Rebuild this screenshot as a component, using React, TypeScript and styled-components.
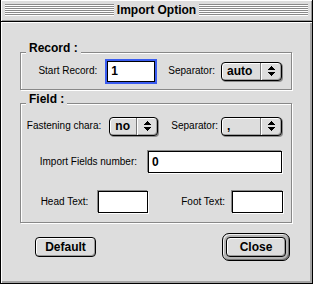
import styled, { createGlobalStyle } from 'styled-components';

const GlobalStyle = createGlobalStyle`
    html, body {
        margin: 0;
        padding: 0;
        background: #dddddd;
    }
    body {
        font-family: "Liberation Sans", Arial, sans-serif;
        color: #000;
    }
`;

const Window = styled.div`
    width: 313px;
    height: 284px;
    box-sizing: border-box;
    border: 1px solid #000;
    border-top: none;
    display: flex;
    flex-direction: column;
    background: #dddddd;
`;

const TitleBar = styled.div`
    height: 22px;
    box-sizing: border-box;
    padding: 4px 4px 5px 4px;
    display: flex;
    align-items: flex-start;
    border-bottom: 1px solid #000;
    background: #dddddd;
    box-shadow: inset 1px 1px 0 #fff, inset -1px -1px 0 #999;
`;

const Stripes = styled.div`
    flex: 1;
    height: 12px;
    background: repeating-linear-gradient(to bottom, #8a8a8a 0 1px, #ffffff 1px 2px);
`;

const Title = styled.div`
    padding: 0 3px;
    font-size: 12px;
    font-weight: bold;
    line-height: 12px;
    white-space: nowrap;
`;

const Content = styled.div`
    flex: 1;
    display: flex;
    flex-direction: column;
    padding-top: 30px;
    box-shadow: inset 1px 1px 0 #fff, inset -2px -2px 0 #a4a4a4;
`;

const GroupBox = styled.div<{ $height: number; $gap?: number }>`
    position: relative;
    box-sizing: border-box;
    margin: ${({ $gap }) => $gap ?? 0}px 0 0 19px;
    width: 272px;
    height: ${({ $height }) => $height}px;
    border: 1px solid #888;
    box-shadow: inset 1px 1px 0 #fff, 1px 1px 0 #fff;
    display: flex;
    flex-direction: column;
`;

const GroupTitle = styled.div`
    position: absolute;
    top: -12px;
    left: 5px;
    padding: 0 3px;
    background: #dddddd;
    font-size: 12px;
    font-weight: bold;
    line-height: 14px;
    white-space: nowrap;
`;

const Row = styled.div<{ $top?: number; $right?: number }>`
    display: flex;
    align-items: center;
    justify-content: flex-end;
    height: 22px;
    margin-top: ${({ $top }) => $top ?? 0}px;
    padding-right: ${({ $right }) => $right ?? 9}px;
`;

const RecordRow = styled(Row)`
    flex: 1;
    height: auto;
`;

const Label = styled.span<{ $left?: number; $right?: number }>`
    font-size: 10px;
    line-height: 12px;
    white-space: nowrap;
    margin-left: ${({ $left }) => $left ?? 0}px;
    margin-right: ${({ $right }) => $right ?? 0}px;
`;

const TextField = styled.div<{ $width: number; $height?: number; $focused?: boolean }>`
    box-sizing: border-box;
    width: ${({ $width }) => $width}px;
    height: ${({ $height }) => $height ?? 22}px;
    border: 1px solid #000;
    background: #fff;
    padding-left: 3px;
    display: flex;
    align-items: center;
    font-size: 12px;
    font-weight: bold;
    box-shadow: ${({ $focused }) =>
        $focused ? '0 0 0 2px #3a5cf0' : '-1px -1px 0 #888, 1px 1px 0 #fff'};
`;

const Popup = styled.div<{ $width: number }>`
    box-sizing: border-box;
    width: ${({ $width }) => $width}px;
    height: 19px;
    display: flex;
    border: 1px solid #000;
    border-radius: 4px;
    background: #dddddd;
    box-shadow: inset 1px 1px 0 #fff, inset -1px -1px 0 #a0a0a0, 1px 1px 0 #8c8c8c;
`;

const PopupValue = styled.span`
    flex: 1;
    padding-left: 5px;
    font-size: 12px;
    font-weight: bold;
    line-height: 17px;
    white-space: nowrap;
`;

const PopupArrows = styled.span`
    width: 20px;
    display: flex;
    align-items: center;
    justify-content: center;
    border-left: 1px solid #777;
    box-shadow: inset 1px 0 0 #fff;
`;

const ButtonRow = styled.div`
    display: flex;
    align-items: center;
    justify-content: space-between;
    padding: 10px 22px 0 34px;
`;

const Button = styled.button<{ $width: number }>`
    box-sizing: border-box;
    width: ${({ $width }) => $width}px;
    height: 20px;
    padding: 0;
    border: 1px solid #000;
    border-radius: 4px;
    background: #dddddd;
    box-shadow: inset 1px 1px 0 #fff, inset -1px -1px 0 #999;
    font-family: "Liberation Sans", Arial, sans-serif;
    font-size: 12px;
    font-weight: bold;
    color: #000;
`;

const DefaultRing = styled.span`
    display: inline-flex;
    padding: 3px;
    border: 1px solid #000;
    border-radius: 7px;
    background: #b4b4b4;
    box-shadow: inset 1px 1px 0 #eee, inset -1px -1px 0 #777;
`;

const ArrowIcon = () => (
    <svg width="7" height="10" viewBox="0 0 7 10" shapeRendering="crispEdges">
        <path d="M3 0h1v1h1v1h1v1h1v1H0V3h1V2h1V1h1z" fill="#000" />
        <path d="M0 6h7v1H6v1H5v1H4v1H3V9H2V8H1V7H0z" fill="#000" />
    </svg>
);

const PopupButton = ({ value, width }: { value: string; width: number }) => (
    <Popup $width={width}>
        <PopupValue>{value}</PopupValue>
        <PopupArrows>
            <ArrowIcon />
        </PopupArrows>
    </Popup>
);

export default function App() {
    return (
        <>
            <GlobalStyle />
            <Window>
                <TitleBar>
                    <Stripes />
                    <Title>Import Option</Title>
                    <Stripes />
                </TitleBar>
                <Content>
                    <GroupBox $height={38}>
                        <GroupTitle>Record :</GroupTitle>
                        <RecordRow>
                            <Label $right={10}>Start Record:</Label>
                            <TextField $width={48} $height={21} $focused>
                                1
                            </TextField>
                            <Label $left={13} $right={6}>
                                Separator:
                            </Label>
                            <PopupButton value="auto" width={61} />
                        </RecordRow>
                    </GroupBox>
                    <GroupBox $height={120} $gap={13}>
                        <GroupTitle>Field :</GroupTitle>
                        <Row $top={11}>
                            <Label $right={8}>Fastening chara:</Label>
                            <PopupButton value="no" width={49} />
                            <Label $left={13} $right={3}>
                                Separator:
                            </Label>
                            <PopupButton value="," width={61} />
                        </Row>
                        <Row $top={14}>
                            <Label $right={11}>Import Fields number:</Label>
                            <TextField $width={134}>0</TextField>
                        </Row>
                        <Row $top={18} $right={8}>
                            <Label $right={10}>Head Text:</Label>
                            <TextField $width={50} />
                            <Label $left={33} $right={7}>
                                Foot Text:
                            </Label>
                            <TextField $width={51} />
                        </Row>
                    </GroupBox>
                    <ButtonRow>
                        <Button $width={61}>Default</Button>
                        <DefaultRing>
                            <Button $width={60}>Close</Button>
                        </DefaultRing>
                    </ButtonRow>
                </Content>
            </Window>
        </>
    );
}
